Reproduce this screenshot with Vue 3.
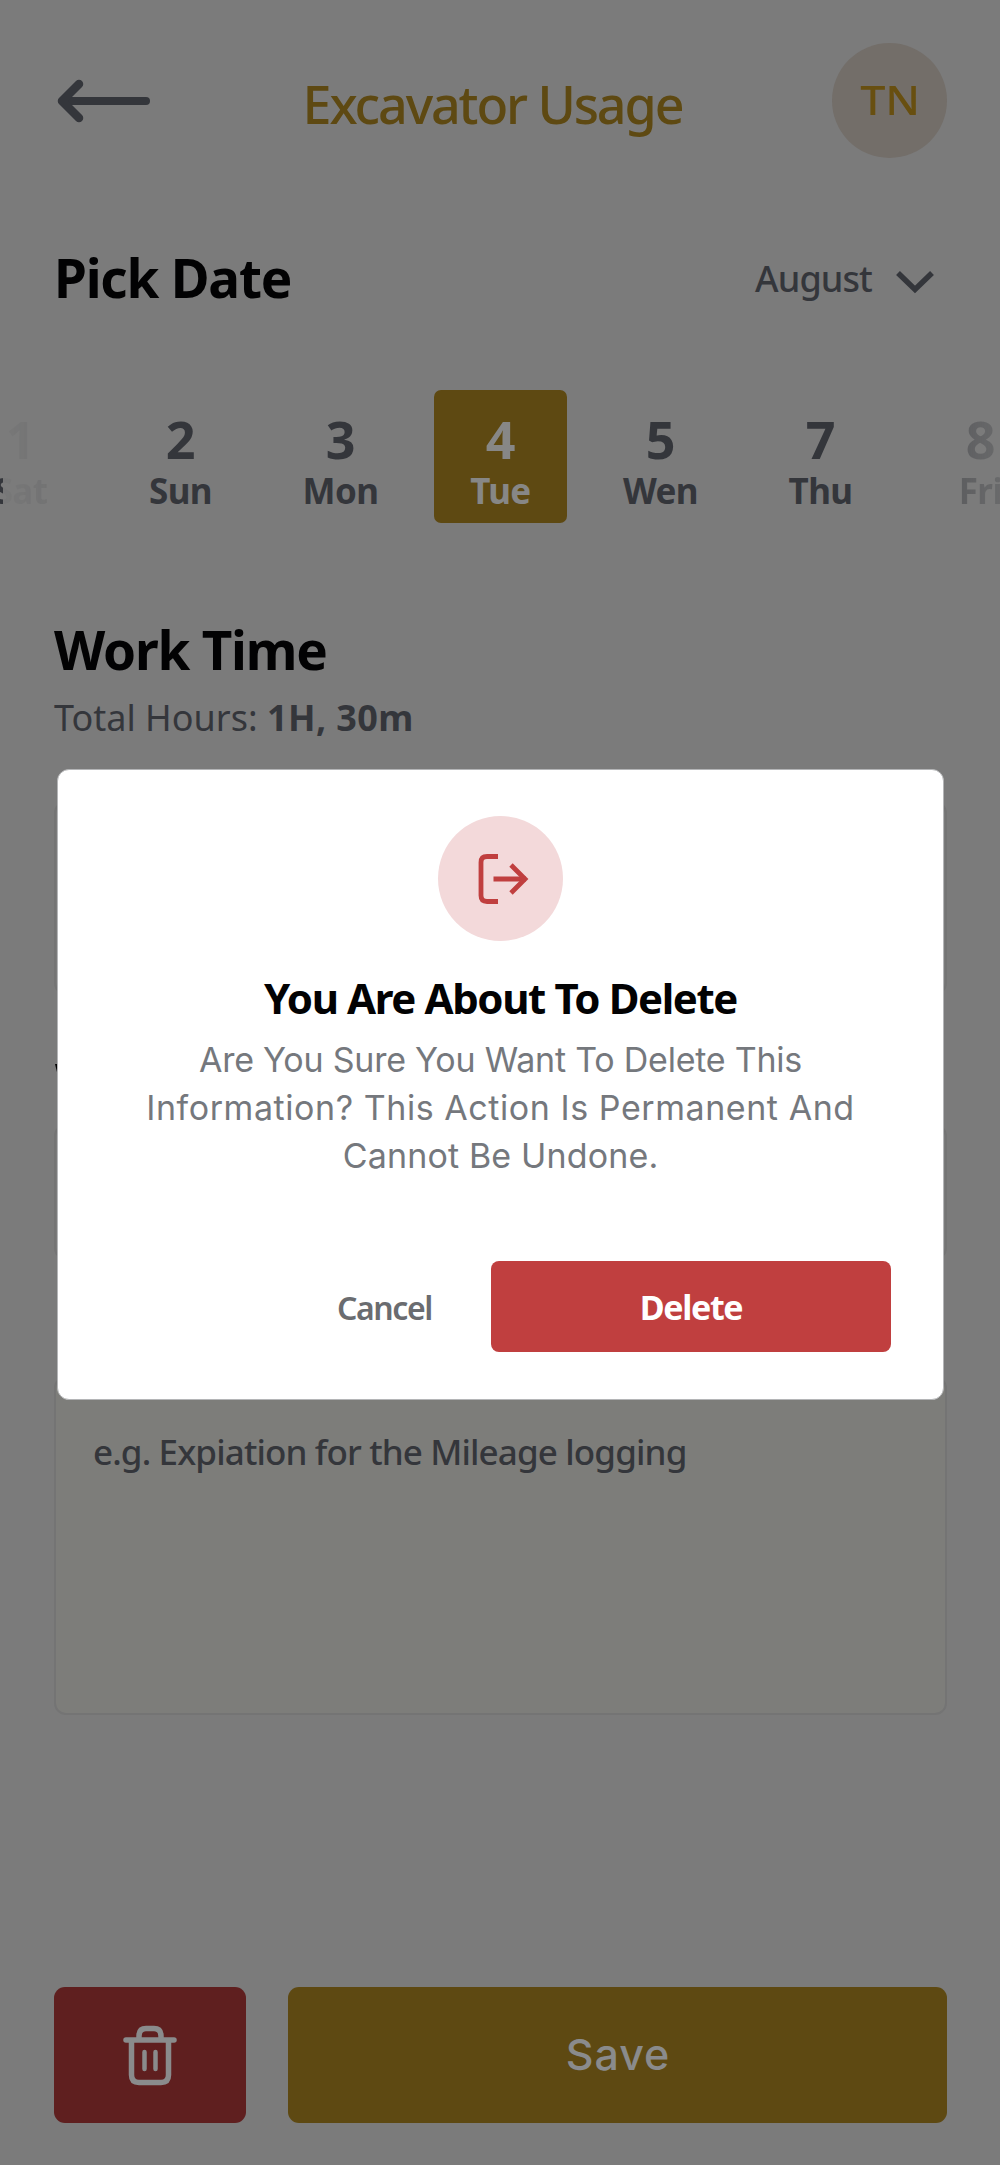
<script setup>
const days = [
  { num: 1, name: 'Sat', state: 'past' },
  { num: 2, name: 'Sun' },
  { num: 3, name: 'Mon' },
  { num: 4, name: 'Tue', state: 'active' },
  { num: 5, name: 'Wen' },
  { num: 7, name: 'Thu' },
  { num: 8, name: 'Fri', state: 'next' },
]
</script>

<template>
  <main class="screen">
    <header class="header">
      <svg class="back" width="96" height="44" viewBox="0 0 96 44" fill="none" stroke="currentColor" stroke-linecap="round" stroke-linejoin="round">
        <path d="M7 22H89" stroke-width="8" />
        <path d="M22 5L5 22L22 39" stroke-width="8.500" />
      </svg>
      <h1 class="title">Excavator Usage</h1>
      <div class="avatar"><span>TN</span></div>
    </header>

    <section class="pick">
      <h2>Pick Date</h2>
      <div class="month">
        <span>August</span>
        <svg width="40" height="24" viewBox="0 0 40 24" fill="none" stroke="currentColor" stroke-width="5.500">
          <path d="M3 3L20 19.500L37 3" />
        </svg>
      </div>
    </section>

    <section class="days">
      <div v-for="d in days" :key="d.num" class="day" :class="d.state">
        <span class="num">{{ d.num }}</span>
        <span class="name">{{ d.name }}</span>
      </div>
    </section>

    <section class="work">
      <h2>Work Time</h2>
      <p>Total Hours: <b>1H, 30m</b></p>
      <div class="card times"></div>
      <h2 class="second">Work</h2>
      <div class="card entry"></div>
      <div class="card note">e.g. Expiation for the Mileage logging</div>
    </section>

    <footer class="actions">
      <button class="trash" aria-label="Delete">
        <svg width="54" height="61" viewBox="0 0 54 61" fill="none" stroke="currentColor" stroke-width="5.500" stroke-linecap="round">
          <path d="M3 15H51" />
          <path d="M16 14V11Q16 3.500 23 3.500H31Q38 3.500 38 11V14" />
          <path d="M8.500 16V50Q8.500 57.500 16 57.500H38Q45.500 57.500 45.500 50V16" />
          <path d="M21.500 27V44M32.500 27V44" stroke-width="4.500" />
        </svg>
      </button>
      <button class="save">Save</button>
    </footer>

    <div class="modal" role="dialog">
      <div class="badge">
        <svg width="54" height="54" viewBox="0 0 54 54" fill="none" stroke="currentColor" stroke-width="4.800">
          <path d="M22 4.500H11Q5 4.500 5 10.500V43.500Q5 49.500 11 49.500H22" />
          <path d="M17.500 27H50" />
          <path d="M35 13L49 27L35 41" />
        </svg>
      </div>
      <h3>You Are About To Delete</h3>
      <p>
        <span class="l1">Are You Sure You Want To Delete This</span>
        <span class="l2">Information? This Action Is Permanent And</span>
        <span class="l3">Cannot Be Undone.</span>
      </p>
      <div class="buttons">
        <button class="cancel">Cancel</button>
        <button class="delete">Delete</button>
      </div>
    </div>
  </main>
</template>

<style>
body { background: #7b7b7b; }
</style>

<style scoped>
.screen {
  position: relative;
  width: 1000px;
  height: 2165px;
  overflow: hidden;
  background: #7b7b7b;
  color: #34363b;
  font-family: "Noto Sans", sans-serif;
  display: flex;
  flex-direction: column;
}
* { box-sizing: border-box; }
h1, h2, h3, p { margin: 0; }
button { border: 0; padding: 0; font-family: inherit; background: none; }

.header {
  height: 200px;
  flex: none;
  display: flex;
  align-items: center;
  justify-content: space-between;
  padding: 1px 53px 0 57px;
}
.title {
  font-size: 52px;
  font-weight: 500;
  letter-spacing: -2.1px;
  line-height: 60px;
  color: #5e4912;
  padding-top: 7px;
}
.avatar {
  width: 115px;
  height: 115px;
  border-radius: 50%;
  background: #736e69;
  color: #684f10;
  display: flex;
  align-items: center;
  justify-content: center;
  font-size: 39px;
  font-weight: 500;
}
.avatar span { transform: scaleX(1.15); padding: 0 0 2px 1px; }

.pick {
  height: 60px;
  flex: none;
  margin-top: 48px;
  padding: 0 65px 0 54px;
  display: flex;
  align-items: center;
  justify-content: space-between;
}
h2 {
  font-size: 53px;
  font-weight: 700;
  line-height: 60px;
  letter-spacing: -1.2px;
  color: #020203;
}
.month {
  display: flex;
  align-items: center;
  gap: 23px;
  font-size: 36px;
  font-weight: 500;
  letter-spacing: -0.9px;
}
.month svg { margin-top: 7px; }

.days {
  flex: none;
  display: flex;
  gap: 27px;
  margin: 82px 0 0 -46px;
  width: 1100px;
}
.day {
  width: 133px;
  height: 133px;
  flex: none;
  padding-top: 22px;
  display: flex;
  flex-direction: column;
  align-items: center;
  font-weight: 700;
  border-radius: 7px;
}
.num { font-size: 52px; line-height: 53px; }
.name { font-size: 35px; line-height: 51px; letter-spacing: -0.6px; }
.active { background: #5e4912; color: #878786; }
.past { mask-image: linear-gradient(90deg, #000 49px, rgba(0, 0, 0, .04) 49px, rgba(0, 0, 0, .12) 100px); }
.next { mask-image: linear-gradient(90deg, rgba(0, 0, 0, .42) 45px, rgba(0, 0, 0, .2) 95px); }

.work {
  display: flex;
  flex-direction: column;
  padding: 0 53px 0 54px;
  margin-top: 97px;
}
.work p {
  margin-top: 13px;
  font-size: 36px;
  line-height: 50px;
}
.work b { font-weight: 700; letter-spacing: 0.4px; }
.card { border: 2px solid #747474; border-radius: 12px; background: #7d7d7a; }
.times { margin-top: 58px; height: 194px; background: none; }
.second { margin-top: 58px; padding-left: 1px; }
.entry { margin-top: 11px; height: 136px; background: none; }
.note {
  margin-top: 116px;
  height: 339px;
  padding: 49px 0 0 37px;
  font-size: 35px;
  font-weight: 500;
  line-height: 50px;
  letter-spacing: -0.87px;
}

.actions {
  position: absolute;
  left: 54px;
  right: 53px;
  bottom: 42px;
  height: 136px;
  display: flex;
  gap: 42px;
}
.actions button { border-radius: 11px; color: #8a8b8c; }
.trash {
  width: 192px;
  background: #5f1f1f;
  display: flex;
  align-items: center;
  justify-content: center;
}
.save {
  flex: 1;
  background: #5e4912;
  font-family: Inter, sans-serif;
  font-size: 43px;
  font-weight: 500;
  letter-spacing: 0.9px;
}
.actions .save { padding: 0 0 2px 1px; }

.modal {
  position: absolute;
  left: 57px;
  top: 769px;
  width: 887px;
  height: 631px;
  border: 1px solid #b4b5b7;
  border-radius: 12px;
  background: #fff;
  padding: 46px 52px 0;
  display: flex;
  flex-direction: column;
  align-items: center;
}
.badge {
  width: 125px;
  height: 125px;
  border-radius: 50%;
  background: #f3d9da;
  color: #c03f3f;
  display: flex;
  align-items: center;
  justify-content: center;
  padding-left: 5px;
}
.modal h3 {
  margin-top: 27px;
  font-size: 42px;
  font-weight: 700;
  line-height: 60px;
  letter-spacing: -1.4px;
  color: #020203;
}
.modal p {
  margin-top: 8px;
  display: flex;
  flex-direction: column;
  align-items: center;
  font-family: Inter, sans-serif;
  font-size: 34px;
  line-height: 48px;
  color: #75787d;
  white-space: nowrap;
}
.l1 { letter-spacing: -0.23px; }
.l2 { letter-spacing: 0.56px; }
.l3 { letter-spacing: 0.15px; }
.buttons {
  width: 100%;
  margin-top: 81px;
  height: 91px;
  display: flex;
  justify-content: flex-end;
  gap: 59px;
}
.cancel { font-size: 32px; font-weight: 600; letter-spacing: -1.4px; color: #6a6c70; padding-top: 2px; }
.delete {
  width: 400px;
  border-radius: 8px;
  background: #c03f3f;
  color: #fff;
  font-size: 34px;
  font-weight: 700;
  letter-spacing: -1.4px;
}
</style>
